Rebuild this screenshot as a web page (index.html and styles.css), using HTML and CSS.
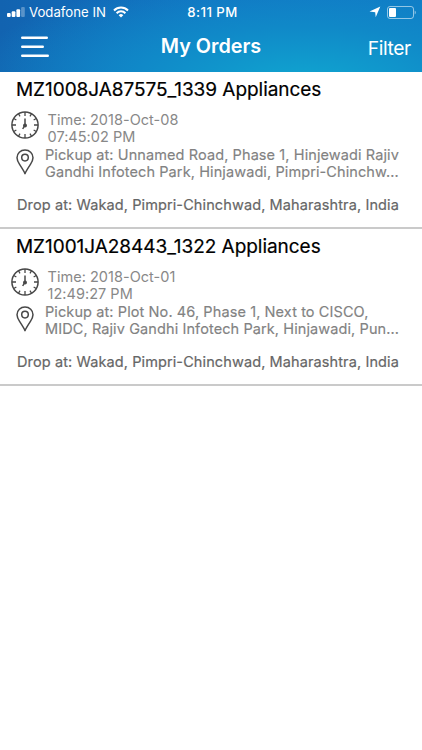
FILE: index.html
```html
<!DOCTYPE html>
<html lang="en">
<head>
<meta charset="utf-8">
<title>My Orders</title>
<link rel="stylesheet" href="styles.css">
</head>
<body>
<svg class="symbols" aria-hidden="true">
  <symbol id="clock" viewBox="0 0 28 28">
    <circle cx="14" cy="14" r="13.1" fill="none" stroke="#484848" stroke-width="1.5"/>
    <g fill="none" stroke="#484848" stroke-width="1.3">
      <path d="M14 1v4M14 23v4M1 14h4M23 14h4M7.5 2.74l1.5 2.6M19 22.66l1.5 2.6M2.74 7.5l2.6 1.5M22.66 19l2.6 1.5M20.5 2.74L19 5.34M9 22.66l-1.5 2.6M25.26 7.5L22.66 9M5.34 19l-2.6 1.5"/>
      <path d="M14 7.500V14l-2.300 4" stroke-width="1.500"/>
    </g>
    <circle cx="14" cy="14.4" r="2" fill="#484848"/>
  </symbol>
  <symbol id="pin" viewBox="0 0 18 26">
    <path d="M9 1C4.500 1 1 4.400 1 8.700c0 2.500 1.100 4.400 2.700 6.900C5.800 18.800 7.700 21.600 9 24.600c1.300-3 3.200-5.800 5.300-9C15.900 13.100 17 11.200 17 8.700 17 4.400 13.500 1 9 1z" fill="none" stroke="#484848" stroke-width="1.500" stroke-linejoin="round"/>
    <circle cx="9" cy="8.600" r="3.300" fill="none" stroke="#484848" stroke-width="1.500"/>
  </symbol>
</svg>
<header class="header">
  <div class="status">
    <div class="carrier">
      <svg class="signal" width="18" height="10" viewBox="0 0 18 10" fill="#fff"><rect y="6" width="3.700" height="4" rx="1"/><rect x="4.700" y="4.300" width="3.700" height="5.700" rx="1"/><rect x="9.400" y="2.200" width="3.700" height="7.800" rx="1"/><rect x="14.100" width="3.700" height="10" rx="1" opacity=".3"/></svg>
      <span class="carrier-name">Vodafone IN</span>
      <svg class="wifi" width="16" height="12" viewBox="0 0 16 12" fill="none" stroke="#fff" stroke-width="2"><path d="M1 4.500a9.900 9.900 0 0 1 14 0M3.600 7.200a6.200 6.200 0 0 1 8.800 0"/><path d="M8 11.500L5.700 9.200a3.250 3.250 0 0 1 4.600 0z" fill="#fff" stroke="none"/></svg>
    </div>
    <span class="clock-time">8:11 PM</span>
    <div class="power">
      <svg width="12" height="12" viewBox="0 0 12 12"><path d="M11.300.500L6.700 11.300 6.200 6.200.500 5.500z" fill="#fff"/></svg>
      <svg width="29" height="13" viewBox="0 0 29 13"><rect x=".5" y=".5" width="26" height="12" rx="2.500" fill="none" stroke="#fff" stroke-opacity=".55"/><rect x="2" y="2" width="7" height="9" rx="1" fill="#fff"/><path d="M27.700 4.500q1.100.6 1.100 2t-1.100 2z" fill="#fff" opacity=".55"/></svg>
    </div>
  </div>
  <nav class="nav">
    <svg class="menu" width="29" height="22" viewBox="0 0 29 22" fill="none" stroke="#fff" stroke-width="2.400" stroke-linecap="round"><path d="M2.200 1.700h24.600M2.200 10.700h20.600M2.200 19.700h25.600"/></svg>
    <h1 class="title">My Orders</h1>
    <span class="filter">Filter</span>
  </nav>
</header>
<main>
  <article class="order">
    <h2 class="order-id">MZ1008JA87575_1339 Appliances</h2>
    <div class="row time-row"><svg class="clock"><use href="#clock"/></svg><p class="time">Time: 2018-Oct-08<br>07:45:02 PM</p></div>
    <div class="row pickup-row"><svg class="pin"><use href="#pin"/></svg><p class="pickup">Pickup at: Unnamed Road, Phase 1, Hinjewadi Rajiv<br>Gandhi Infotech Park, Hinjawadi, Pimpri-Chinchw...</p></div>
    <p class="drop">Drop at: Wakad, Pimpri-Chinchwad, Maharashtra, India</p>
  </article>
  <article class="order">
    <h2 class="order-id">MZ1001JA28443_1322 Appliances</h2>
    <div class="row time-row"><svg class="clock"><use href="#clock"/></svg><p class="time">Time: 2018-Oct-01<br>12:49:27 PM</p></div>
    <div class="row pickup-row"><svg class="pin"><use href="#pin"/></svg><p class="pickup">Pickup at: Plot No. 46, Phase 1, Next to CISCO,<br>MIDC, Rajiv Gandhi Infotech Park, Hinjawadi, Pun...</p></div>
    <p class="drop">Drop at: Wakad, Pimpri-Chinchwad, Maharashtra, India</p>
  </article>
</main>
</body>
</html>
```
FILE: styles.css
```css
* { box-sizing: border-box; margin: 0; padding: 0; }
body { width: 422px; height: 750px; overflow: hidden; background: #fff; font-family: Inter, "Liberation Sans", sans-serif; white-space: nowrap; }
svg { display: block; flex: none; }
.symbols { display: none; }
.header { height: 72px; color: #fff; background: radial-gradient(ellipse 340px 110px at 305px 82px, #10a5d0 0%, #1089c8 50%, rgba(16, 115, 194, 0) 100%), linear-gradient(90deg, #1263b0 0%, #1172c3 50%, #1078c6 100%); }
.status { display: grid; grid-template-columns: 1fr auto 1fr; align-items: center; height: 24px; padding: 0 6px 0 7px; }
.carrier { display: flex; align-items: center; }
.carrier-name { margin: 0 7px 0 4px; font-size: 13.2px; letter-spacing: 0; }
.clock-time { font-size: 13.2px; font-weight: 500; letter-spacing: .45px; margin-left: 2px; }
.power { display: flex; justify-content: flex-end; align-items: center; gap: 6px; }
.nav { display: grid; grid-template-columns: 1fr auto 1fr; align-items: center; height: 46px; padding: 0 11px 0 20px; }
.menu { margin-top: -1px; }
.title { font-size: 19.8px; line-height: 24px; font-weight: 600; margin: -3px 9px 0 0; }
.filter { justify-self: end; font-size: 19.2px; letter-spacing: -.35px; line-height: 24px; margin-top: 2px; }
.order { height: 157px; border-bottom: 2px solid #cacaca; padding: 5px 0 0 11px; }
.order-id { height: 26px; padding-left: 5px; font-size: 19px; letter-spacing: -.04px; line-height: 26px; font-weight: 400; color: #000; -webkit-text-stroke: .2px #000; }
.row { display: flex; }
.time-row { height: 42.500px; padding-top: 8px; }
.clock { width: 28px; height: 28px; }
.time { margin-left: 8.500px; font-size: 14.5px; letter-spacing: .03px; line-height: 17.3px; color: #888; }
.pickup-row { height: 43px; }
.pin { width: 18px; height: 26px; margin: 3px 0 0 5px; }
.pickup { margin-left: 11px; font-size: 14.5px; letter-spacing: .1px; line-height: 17.3px; color: #828282; -webkit-text-stroke: .15px #828282; }
.drop { padding-left: 6px; font-size: 14.5px; letter-spacing: .11px; line-height: 32px; color: #666; -webkit-text-stroke: .2px #666; }
```
